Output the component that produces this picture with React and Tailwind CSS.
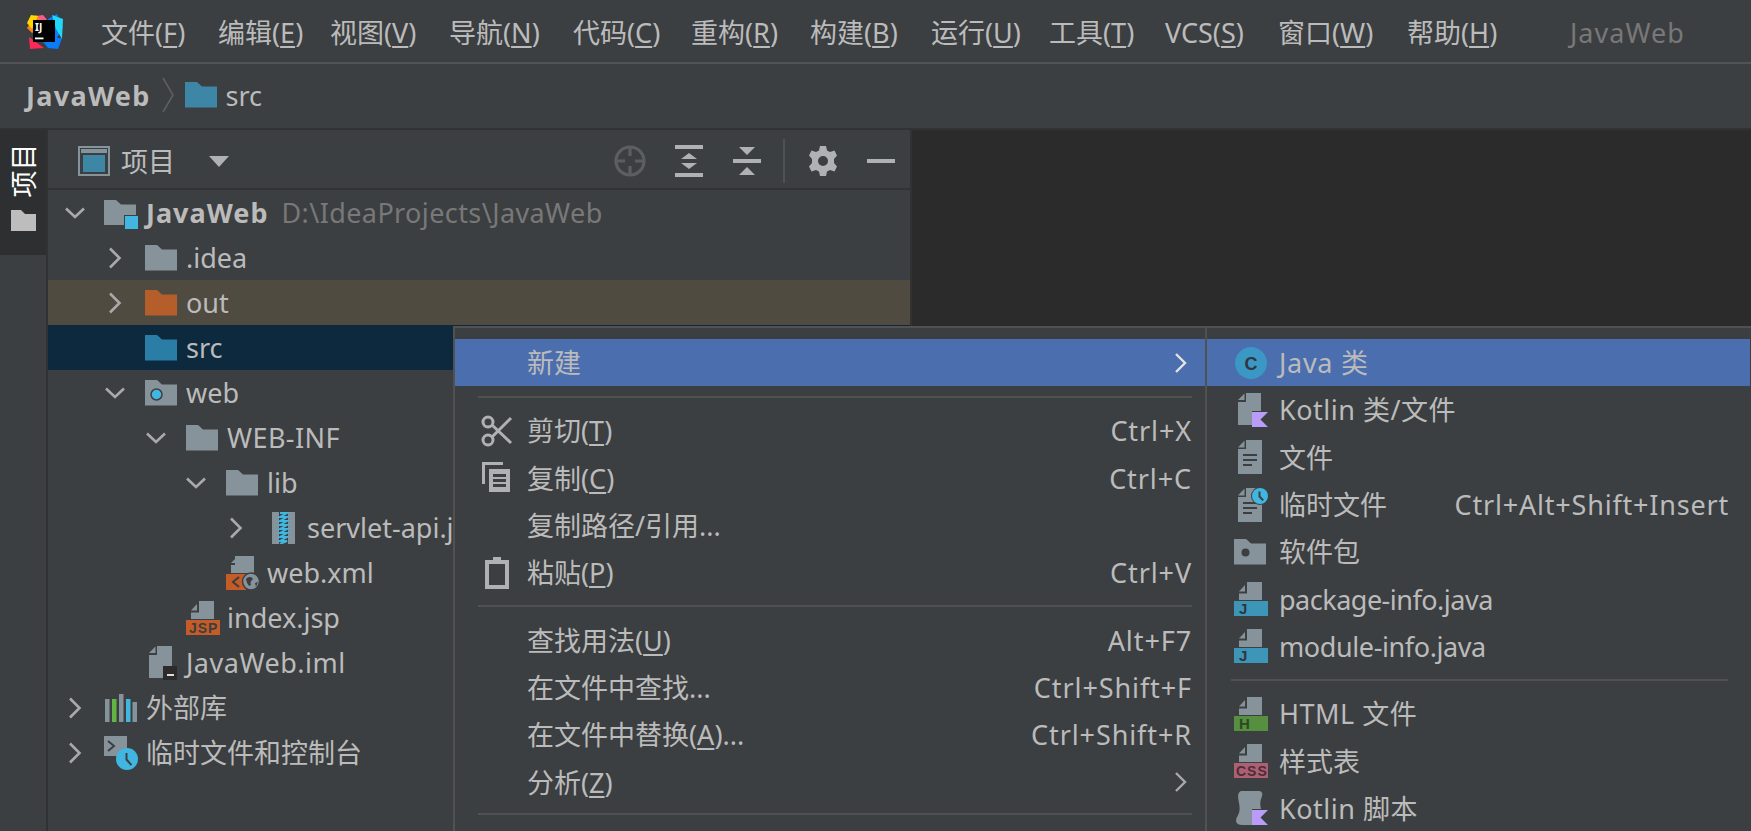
import React from "react";

const Folder = ({ color = "#87939a", children }) => (
  <svg width="32" height="32" viewBox="0 0 32 32" className="shrink-0">
    <path d="M0 3H12L17 7.500H32V28.500H0Z" fill={color} />
    {children}
  </svg>
);

const ChevR = ({ c = "#a9a9a9" }) => (
  <svg width="20" height="22" viewBox="0 0 20 22"><path d="M5 1.500L14.500 11L5 20.500" fill="none" stroke={c} strokeWidth="2.600" /></svg>
);
const ChevD = () => (
  <svg width="20" height="12" viewBox="0 0 20 12"><path d="M1 1.500L10 10L19 1.500" fill="none" stroke="#a9a9a9" strokeWidth="2.600" /></svg>
);

const FileHead = () => (
  <g>
    <path d="M13 0H28V18H5V11.500H13Z" fill="#87939a" />
    <path d="M5 9.500L11 3V9.500Z" fill="#87939a" />
  </g>
);

const Banner = ({ color, dark, label, size = 15, spacing = 0, x = 5 }) => (
  <svg width="34" height="34" viewBox="0 0 34 34" className="shrink-0">
    <FileHead />
    <rect x="0" y="19" width="34" height="15" fill={color} />
    <text x={x} y="32" fill={dark} fontSize={size} fontWeight="700" letterSpacing={spacing} fontFamily="'Liberation Sans',sans-serif">{label}</text>
  </svg>
);

const DocLines = () => (
  <g>
    <path d="M12 0H28V34H4V9H12Z" fill="#87939a" />
    <path d="M4 7.500L10.500 0.500V7.500Z" fill="#87939a" />
    <path d="M9 15H23M9 20H23M9 25H18" stroke="#3c3f41" strokeWidth="2" />
  </g>
);

const Flag = ({ x = 18, y = 19 }) => <path transform={`translate(${x} ${y})`} d="M0 0H16L8.500 7.500L16 15H0Z" fill="#b99bf8" />;

const Clock = ({ cx, cy, r }) => (
  <g>
    <circle cx={cx} cy={cy} r={r} fill="#40b6e0" />
    <path d={`M${cx - 0.500} ${cy - r * 0.55}V${cy + 0.500}L${cx + r * 0.4} ${cy + r * 0.55}`} fill="none" stroke="#3c3f41" strokeWidth="2" />
  </g>
);

const Row = ({ pl, chev, icon, bg = "", children }) => (
  <div className={`flex h-[45px] shrink-0 items-center whitespace-nowrap ${pl} ${bg}`}>
    <div className="flex w-5 shrink-0 items-center justify-center">{chev === "r" ? <ChevR /> : chev === "d" ? <ChevD /> : null}</div>
    <div className="ml-5 flex w-8 shrink-0 items-center justify-center">{icon}</div>
    <div className="ml-[9px] text-[#bbbbbb]">{children}</div>
  </div>
);

const U = ({ children }) => <span className="underline underline-offset-[3px] decoration-[1.500px]">{children}</span>;

const Top = ({ t, k, after = ")" }) => (
  <span className="text-[#bbbbbb]">{t}(<U>{k}</U>{after}</span>
);

const TopItem = ({ w, t, k }) => (
  <div className={`shrink-0 whitespace-nowrap ${w}`}><Top t={t} k={k} /></div>
);

const MenuRow = ({ icon, label, shortcut, arrow, active }) => (
  <div className={`flex h-[47.300px] items-center pr-[13px] ${active ? "bg-[#4b6eaf]" : ""}`}>
    <div className="ml-[26px] flex w-8 shrink-0 items-center justify-center">{icon}</div>
    <div className="ml-[14px] flex-1 whitespace-nowrap text-[#bbbbbb]">{label}</div>
    {shortcut ? <div className="whitespace-nowrap tracking-[0.900px] text-[#bbbbbb]">{shortcut}</div> : null}
    {arrow ? <div className="mr-[4px]"><svg width="14" height="22" viewBox="0 0 14 22"><path d="M2 2L11 11L2 20" fill="none" stroke={active ? "#e4e4e4" : "#a9a9a9"} strokeWidth="2.400" /></svg></div> : null}
  </div>
);

const SubRow = ({ icon, label, shortcut, active, track = "" }) => (
  <div className={`flex h-[47.300px] items-center pr-[21px] ${active ? "bg-[#4b6eaf]" : ""}`}>
    <div className="ml-[27px] flex w-[34px] shrink-0 items-center justify-center">{icon}</div>
    <div className={`ml-[11px] flex-1 whitespace-nowrap text-[#bbbbbb] ${track}`}>{label}</div>
    {shortcut ? <div className="whitespace-nowrap tracking-[0.800px] text-[#bbbbbb]">{shortcut}</div> : null}
  </div>
);

const Sep = ({ h, cls }) => (
  <div className={`flex items-center ${h} ${cls}`}><div className="h-[2px] w-full bg-[#515151]" /></div>
);

const G = "#afb1b3";

export default function App() {
  return (
    <div className="relative flex h-[831px] w-[1751px] flex-col overflow-hidden bg-[#3c3f41] font-['Noto_Sans','Noto_Sans_CJK_SC',sans-serif] text-[27px] leading-none">
      {/* title bar */}
      <div className="flex h-[64px] shrink-0 items-center border-b-2 border-[#515355] pt-[2px]">
        <svg width="38" height="38" viewBox="0 0 38 38" className="ml-[26px] shrink-0">
          <path d="M4 4L17 2L22 8L5 12Z" fill="#fb5a8f" />
          <path d="M1 15L10 2L20 12L6 20Z" fill="#fc801d" />
          <path d="M1 10L5 2L12 3L6 16Z" fill="#ffd600" />
          <path d="M22 6L31 1L37 14L30 27Z" fill="#087cfa" />
          <path d="M26 2L37 6L36 26L30 16Z" fill="#21d7f7" />
          <path d="M14 25L36 25L32 36L22 35Z" fill="#087cfa" />
          <path d="M3 24L18 35L4 36Z" fill="#fe2857" />
          <rect x="7" y="7" width="22" height="22" fill="#000000" />
          <text x="9" y="17.500" fill="#ffffff" fontSize="10" fontWeight="700" fontFamily="'Noto Sans',sans-serif">IJ</text>
          <rect x="9" y="24.500" width="8.500" height="1.800" fill="#ffffff" />
        </svg>
        <div className="ml-[37px] flex">
          <TopItem w="w-[117px]" t="文件" k="F" />
          <TopItem w="w-[112px]" t="编辑" k="E" />
          <TopItem w="w-[119px]" t="视图" k="V" />
          <TopItem w="w-[124px]" t="导航" k="N" />
          <TopItem w="w-[118px]" t="代码" k="C" />
          <TopItem w="w-[119px]" t="重构" k="R" />
          <TopItem w="w-[121px]" t="构建" k="B" />
          <TopItem w="w-[118px]" t="运行" k="U" />
          <TopItem w="w-[116px]" t="工具" k="T" />
          <div className="w-[113px] shrink-0 whitespace-nowrap text-[#bbbbbb]">VCS(<U>S</U>)</div>
          <TopItem w="w-[129px]" t="窗口" k="W" />
          <TopItem w="w-[163px]" t="帮助" k="H" />
        </div>
        <div className="tracking-[1px] text-[#787878]">JavaWeb</div>
      </div>

      {/* breadcrumb */}
      <div className="flex h-[66px] shrink-0 items-center border-b-2 border-[#323232] pb-[2px] pl-[26px]">
        <span className="font-bold tracking-[1.300px] text-[#bbbbbb]">JavaWeb</span>
        <svg width="13" height="36" viewBox="0 0 13 36" className="ml-[11px] shrink-0"><path d="M1 1L11 18L1 35" fill="none" stroke="#5e6060" strokeWidth="1.500" /></svg>
        <div className="ml-[10px]"><Folder color="#3d86a6" /></div>
        <span className="ml-[9px] text-[#bbbbbb]">src</span>
      </div>

      {/* body */}
      <div className="flex min-h-0 flex-1">
        <div className="w-[48px] shrink-0 border-r-2 border-[#323232]">
          <div className="flex h-[125px] w-[46px] flex-col items-center bg-[#2d2f30]">
            <div className="mt-[8px] flex h-[64px] w-[26px] items-center justify-center">
              <span className="-rotate-90 whitespace-nowrap text-white">项目</span>
            </div>
            <svg width="25" height="21" viewBox="0 0 25 21" className="mt-[8px]"><path d="M0 0H10L14 4H25V21H0Z" fill="#bdbdbd" /></svg>
          </div>
        </div>

        <div className="flex w-[862px] shrink-0 flex-col">
          <div className="flex h-[60px] shrink-0 items-center border-b-2 border-[#323232] pt-[4px]">
            <svg width="32" height="30" viewBox="0 0 32 30" className="ml-[30px] shrink-0">
              <rect x="1" y="1" width="30" height="28" fill="none" stroke="#87939a" strokeWidth="2" />
              <rect x="3" y="3" width="26" height="4" fill="#87939a" />
              <rect x="5" y="9" width="22" height="17" fill="#3d86a6" />
            </svg>
            <span className="ml-[11px] w-[54px] text-[#bbbbbb]">项目</span>
            <svg width="20" height="11" viewBox="0 0 20 11" className="ml-[34px] shrink-0"><path d="M0 0H20L10 11Z" fill={G} /></svg>
            <svg width="32" height="32" viewBox="0 0 32 32" className="ml-[385px] shrink-0" fill="none" stroke="#5c5e5f" strokeWidth="3.200">
              <circle cx="16" cy="16" r="14" />
              <path d="M16 2V11M16 21V30M2 16H11M21 16H30" />
            </svg>
            <svg width="28" height="32" viewBox="0 0 28 32" className="ml-[29px] shrink-0" fill={G}>
              <rect x="0" y="0" width="28" height="4" />
              <rect x="0" y="28" width="28" height="4" />
              <path d="M14 8L22 14H6ZM14 24L6 18H22Z" />
            </svg>
            <svg width="28" height="30" viewBox="0 0 28 30" className="ml-[30px] shrink-0" fill={G}>
              <rect x="0" y="13" width="28" height="4" />
              <path d="M6 1H22L14 9ZM14 21L22 29H6Z" />
            </svg>
            <div className="ml-[22px] h-[44px] w-[2px] shrink-0 bg-[#515151]" />
            <svg width="28" height="30" viewBox="0 0 28 30" className="ml-[24px] shrink-0" fill={G}>
              <path fillRule="evenodd" d="M11 0H17L18 4.500L21 6L25.500 4.500L28 9.500L25 13V17L28 20.500L25.500 25.500L21 24L18 25.500L17 30H11L10 25.500L7 24L2.500 25.500L0 20.500L3 17V13L0 9.500L2.500 4.500L7 6L10 4.500ZM14 10A5 5 0 1 0 14 20A5 5 0 1 0 14 10Z" />
            </svg>
            <div className="ml-[30px] h-[4px] w-[28px] shrink-0 bg-[#afb1b3]" />
          </div>

          <div className="flex min-h-0 flex-1 flex-col">
            <Row pl="pl-[17px]" chev="d" icon={
              <svg width="34" height="32" viewBox="0 0 34 32" className="shrink-0"><path d="M0 3H12L17 7.500H32V28H0Z" fill="#87939a" /><rect x="20" y="18" width="14" height="14" fill="#3c3f41" /><rect x="21" y="19" width="13" height="13" fill="#40b6e0" /></svg>
            }>
              <span className="font-bold tracking-[1px]">JavaWeb</span><span className="ml-[13px] tracking-[0.400px] text-[#787878]">D:\IdeaProjects\JavaWeb</span>
            </Row>
            <Row pl="pl-[57px]" chev="r" icon={<Folder />}>.idea</Row>
            <Row pl="pl-[57px]" chev="r" bg="bg-[#4f4b41]" icon={<Folder color="#b55e2b" />}>out</Row>
            <Row pl="pl-[57px]" bg="bg-[#0d293e]" icon={<Folder color="#2a7ea5" />}>src</Row>
            <Row pl="pl-[57px]" chev="d" icon={
              <Folder><circle cx="11.500" cy="17.500" r="5.500" fill="#40b6e0" stroke="#3c3f41" strokeWidth="1.500" /></Folder>
            }>web</Row>
            <Row pl="pl-[98px]" chev="d" icon={<Folder />}><span className="tracking-[0.400px]">WEB-INF</span></Row>
            <Row pl="pl-[138px]" chev="d" icon={<Folder />}>lib</Row>
            <Row pl="pl-[178px]" chev="r" icon={
              <svg width="32" height="32" viewBox="0 0 32 32" className="shrink-0">
                <rect x="6" y="0" width="23" height="32" fill="#87939a" />
                <rect x="13" y="0" width="9" height="32" fill="#3c3f41" />
                <path d="M14 1H21L14 5H21L14 9H21L14 13H21L14 17H21L14 21H21L14 25H21L14 29H21L14 32" fill="none" stroke="#40b6e0" strokeWidth="2" />
              </svg>
            }>servlet-api.jar</Row>
            <Row pl="pl-[138px]" icon={
              <svg width="34" height="34" viewBox="0 0 34 34" className="ml-[2px] shrink-0">
                <path d="M9 0H28V17H5V9H9Z" fill="#87939a" />
                <path d="M5 7L12 0V7Z" fill="#87939a" />
                <rect x="0" y="18" width="20" height="16" fill="#c55c27" />
                <path d="M13 21L7 26L13 31" fill="none" stroke="#3c3f41" strokeWidth="2.200" />
                <circle cx="25" cy="25.500" r="8.500" fill="#87939a" stroke="#3c3f41" strokeWidth="1.500" />
                <path d="M20 23C23 20 26 21 27 23C25 25 24 26 25 29C23 31 21 28 20 23ZM29 27L32 26L30 31Z" fill="#3c3f41" />
              </svg>
            }>web.xml</Row>
            <Row pl="pl-[98px]" icon={<div className="ml-[2px]"><Banner color="#c55c27" dark="#3c3f41" label="JSP" size={14} spacing={1} x={3} /></div>}>index.jsp</Row>
            <Row pl="pl-[57px]" icon={
              <svg width="32" height="34" viewBox="0 0 32 34" className="shrink-0">
                <path d="M12 0H27V32H4V9H12Z" fill="#87939a" />
                <path d="M4 7L10.500 0.500V7Z" fill="#87939a" />
                <rect x="18" y="20" width="14" height="14" fill="#2b2b2b" />
                <rect x="22" y="28" width="7" height="2" fill="#dddddd" />
              </svg>
            }><span className="tracking-[0.500px]">JavaWeb.iml</span></Row>
            <Row pl="pl-[17px]" chev="r" icon={
              <svg width="32" height="28" viewBox="0 0 32 28" className="shrink-0">
                <rect x="0" y="5" width="4.500" height="23" fill="#87939a" />
                <rect x="7" y="5" width="4.500" height="23" fill="#62b543" />
                <rect x="14" y="0" width="4.500" height="28" fill="#87939a" />
                <rect x="21" y="5" width="4.500" height="23" fill="#40b6e0" />
                <rect x="27.500" y="8" width="4.500" height="20" fill="#87939a" />
              </svg>
            }>外部库</Row>
            <Row pl="pl-[17px]" chev="r" icon={
              <svg width="34" height="34" viewBox="0 0 34 34" className="shrink-0">
                <rect x="0" y="0" width="23" height="20" fill="#87939a" />
                <path d="M4 5L10 10L4 15" fill="none" stroke="#3c3f41" strokeWidth="2" />
                <Clock cx={23} cy={23} r={11} />
              </svg>
            }>临时文件和控制台</Row>
          </div>
        </div>

        <div className="min-w-0 flex-1 border-l-2 border-[#323232] bg-[#2b2b2b]" />
      </div>

      {/* popup menu */}
      <div className="absolute left-[453px] top-[326px] flex h-[505px] w-[1298px] border-t-2 border-[#515151] bg-[#3c3f41]">
        <div className="w-[752px] shrink-0 border-l-2 border-[#515151] pt-[11px]">
          <MenuRow active label="新建" arrow />
          <Sep h="h-[21px]" cls="pl-[23px] pr-[13px]" />
          <MenuRow label={<Top t="剪切" k="T" />} shortcut="Ctrl+X" icon={
            <svg width="32" height="32" viewBox="0 0 32 32" fill="none" stroke={G} strokeWidth="3">
              <circle cx="7" cy="7" r="5" /><circle cx="7" cy="25" r="5" />
              <path d="M11 10L30 28M11 22L30 3" />
            </svg>
          } />
          <MenuRow label={<Top t="复制" k="C" />} shortcut="Ctrl+C" icon={
            <svg width="30" height="32" viewBox="0 0 30 32" fill={G}>
              <path d="M0 0H21V3H3V22H0Z" />
              <path fillRule="evenodd" d="M7 7H28V30H7ZM11 12V15H24V12ZM11 17V20H24V17ZM11 22V25H24V22Z" />
            </svg>
          } />
          <MenuRow label="复制路径/引用..." />
          <MenuRow label={<Top t="粘贴" k="P" />} shortcut="Ctrl+V" icon={
            <svg width="24" height="32" viewBox="0 0 24 32" fill={G}>
              <path fillRule="evenodd" d="M8 0H16V3H24V32H0V3H8ZM4 7V28H20V7Z" />
            </svg>
          } />
          <Sep h="h-[20px]" cls="pl-[23px] pr-[13px]" />
          <MenuRow label={<Top t="查找用法" k="U" />} shortcut="Alt+F7" />
          <MenuRow label="在文件中查找..." shortcut="Ctrl+Shift+F" />
          <MenuRow label={<Top t="在文件中替换" k="A" after=")..." />} shortcut="Ctrl+Shift+R" />
          <MenuRow label={<Top t="分析" k="Z" />} arrow />
          <Sep h="h-[16px]" cls="pl-[23px] pr-[13px]" />
        </div>

        <div className="flex-1 border-l-2 border-[#515151] pt-[11px] pr-px">
          <SubRow active track="tracking-[0.700px]" label="Java 类" icon={
            <svg width="32" height="32" viewBox="0 0 32 32"><circle cx="16" cy="16" r="16" fill="#3b97c4" /><text x="16" y="22.500" textAnchor="middle" fill="#31363b" fontSize="18" fontWeight="700" fontFamily="'Liberation Sans',sans-serif">C</text></svg>
          } />
          <SubRow track="tracking-[0.500px]" label="Kotlin 类/文件" icon={
            <svg width="34" height="34" viewBox="0 0 34 34">
              <path d="M12 0H27V18H18V32H4V9H12Z" fill="#87939a" /><path d="M4 7L10.500 0.500V7Z" fill="#87939a" /><Flag />
            </svg>
          } />
          <SubRow label="文件" icon={<svg width="34" height="34" viewBox="0 0 34 34"><DocLines /></svg>} />
          <SubRow label="临时文件" shortcut="Ctrl+Alt+Shift+Insert" icon={
            <svg width="34" height="34" viewBox="0 0 34 34"><DocLines /><circle cx="26" cy="8" r="9" fill="#3c3f41" /><Clock cx={26} cy={8} r={8} /></svg>
          } />
          <SubRow label="软件包" icon={<div className="ml-[-2px]"><Folder><circle cx="11.500" cy="16.500" r="4" fill="#3c3f41" /></Folder></div>} />
          <SubRow track="tracking-[-0.500px]" label="package-info.java" icon={<Banner color="#3d95b8" dark="#31363b" label="J" />} />
          <SubRow track="tracking-[-0.400px]" label="module-info.java" icon={<Banner color="#3d95b8" dark="#31363b" label="J" />} />
          <Sep h="h-[20px]" cls="pl-[24px] pr-[22px]" />
          <SubRow track="tracking-[0.500px]" label="HTML 文件" icon={<Banner color="#568f3f" dark="#2c4a22" label="H" />} />
          <SubRow label="样式表" icon={<Banner color="#ab6074" dark="#4e2d36" label="CSS" size={14} spacing={1} x={2} />} />
          <SubRow track="tracking-[0.500px]" label="Kotlin 脚本" icon={
            <svg width="34" height="34" viewBox="0 0 34 34">
              <path d="M7 0H25C29 0 29 4 27 8C26 11 26 14 27 18H18V34H8C2 34 1 30 3 26C6 21 6 18 5 12C4 6 3 2 7 0Z" fill="#87939a" /><Flag y={19} />
            </svg>
          } />
        </div>
      </div>
    </div>
  );
}
